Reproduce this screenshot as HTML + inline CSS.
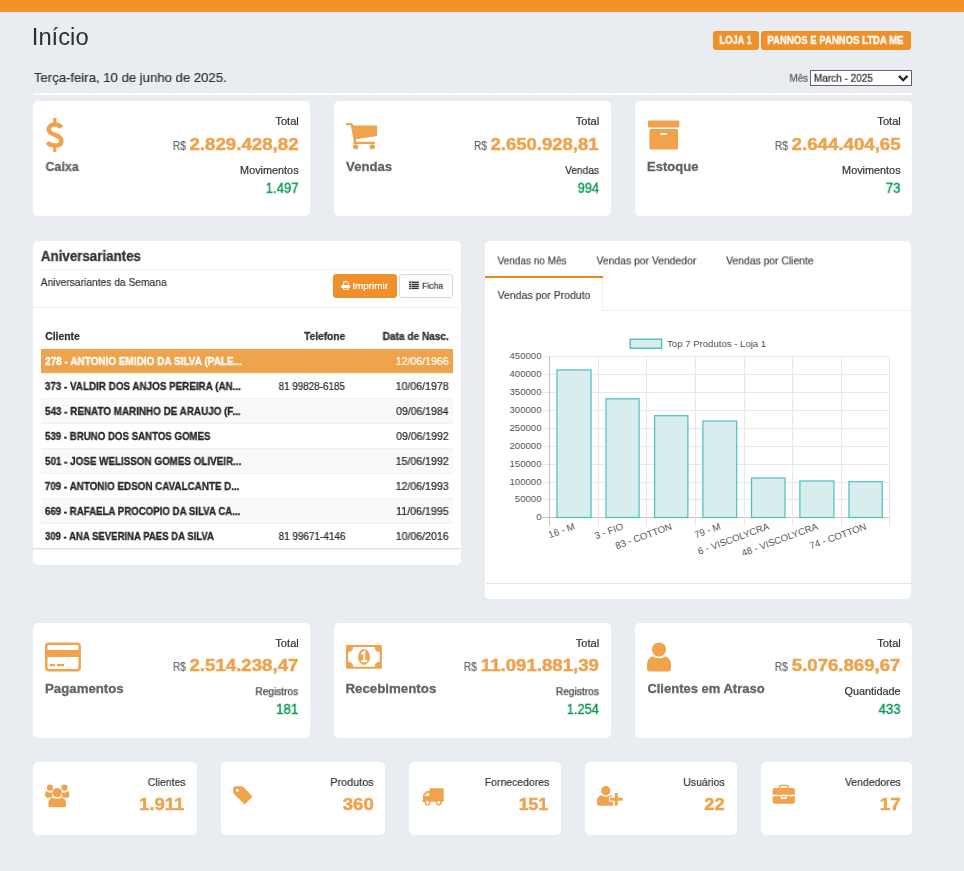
<!DOCTYPE html><html><head><meta charset="utf-8"><style>
*{margin:0;padding:0;box-sizing:border-box}
html,body{width:964px;height:871px;overflow:hidden;background:#e9edf1;font-family:"Liberation Sans",sans-serif;position:relative}
.a{position:absolute}
.card{position:absolute;background:#fff;border-radius:5px}
.t{position:absolute;white-space:nowrap;line-height:1;left:0;top:0;will-change:transform;transform-origin:0 0}
svg{position:absolute;overflow:visible}
</style></head><body>
<div class="a" style="left:0;top:0;width:964px;height:12px;background:#f39325"></div>
<div class="a" style="left:713px;top:31px;width:46px;height:19px;background:#f0902b;border-radius:3px"></div>
<div class="a" style="left:761px;top:31px;width:150px;height:19px;background:#f0902b;border-radius:3px"></div>
<div class="a" style="left:810px;top:70px;width:102px;height:16px;background:#fff;border:1px solid #666"></div>
<svg style="left:0;top:0" width="964" height="871"><path d="M898.9 75.9 L903.2 80.2 L907.5 75.9" fill="none" stroke="#222" stroke-width="2.2"/></svg>
<div class="a" style="left:33px;top:93px;width:879px;height:1px;background:repeating-linear-gradient(90deg,#f4f6f8 0 3px,#fff 3px 5px)"></div>
<div class="a" style="left:33px;top:94px;width:879px;height:1px;background:#fff"></div>
<div class="card" style="left:33px;top:101px;width:277px;height:115px"></div>
<div class="card" style="left:334px;top:101px;width:277px;height:115px"></div>
<div class="card" style="left:635px;top:101px;width:277px;height:115px"></div>
<div class="card" style="left:33px;top:241px;width:428px;height:324px"></div>
<div class="a" style="left:41px;top:269px;width:412px;height:1px;background:#f0f0f0"></div>
<div class="a" style="left:33px;top:307px;width:428px;height:1px;background:#f0f0f0"></div>
<div class="a" style="left:333px;top:274px;width:64px;height:24px;background:#f0902b;border-radius:3px"></div>
<div class="a" style="left:399px;top:274px;width:54px;height:24px;background:#fff;border:1px solid #d8d8d8;border-radius:3px"></div>
<div class="a" style="left:41px;top:349px;width:412px;height:24px;background:#eea44d"></div>
<div class="a" style="left:41px;top:374px;width:412px;height:24px;background:#fff"></div>
<div class="a" style="left:41px;top:373px;width:412px;height:1px;background:#f1f1f1"></div>
<div class="a" style="left:41px;top:399px;width:412px;height:24px;background:#f9f9f9"></div>
<div class="a" style="left:41px;top:398px;width:412px;height:1px;background:#f1f1f1"></div>
<div class="a" style="left:41px;top:424px;width:412px;height:24px;background:#fff"></div>
<div class="a" style="left:41px;top:423px;width:412px;height:1px;background:#f1f1f1"></div>
<div class="a" style="left:41px;top:449px;width:412px;height:24px;background:#f9f9f9"></div>
<div class="a" style="left:41px;top:448px;width:412px;height:1px;background:#f1f1f1"></div>
<div class="a" style="left:41px;top:474px;width:412px;height:24px;background:#fff"></div>
<div class="a" style="left:41px;top:473px;width:412px;height:1px;background:#f1f1f1"></div>
<div class="a" style="left:41px;top:499px;width:412px;height:24px;background:#f9f9f9"></div>
<div class="a" style="left:41px;top:498px;width:412px;height:1px;background:#f1f1f1"></div>
<div class="a" style="left:41px;top:524px;width:412px;height:24px;background:#fff"></div>
<div class="a" style="left:41px;top:523px;width:412px;height:1px;background:#f1f1f1"></div>
<div class="a" style="left:33px;top:548px;width:428px;height:1px;background:#dddddd"></div>
<div class="a" style="left:33px;top:549px;width:428px;height:1px;background:#f2f2f2"></div>
<div class="card" style="left:485px;top:241px;width:426px;height:358px"></div>
<div class="a" style="left:485px;top:276px;width:118px;height:2px;background:#e8861c"></div>
<div class="a" style="left:602px;top:278px;width:1px;height:32px;background:#f0f0f0"></div>
<div class="a" style="left:602px;top:310px;width:309px;height:1px;background:#f0f0f0"></div>
<div class="a" style="left:486px;top:583px;width:425px;height:1px;background:#e3e3e3"></div>
<div class="card" style="left:33px;top:623px;width:277px;height:115px"></div>
<div class="card" style="left:334px;top:623px;width:277px;height:115px"></div>
<div class="card" style="left:635px;top:623px;width:277px;height:115px"></div>
<div class="card" style="left:33px;top:762px;width:164px;height:73px"></div>
<div class="card" style="left:221px;top:762px;width:164px;height:73px"></div>
<div class="card" style="left:409px;top:762px;width:152px;height:73px"></div>
<div class="card" style="left:585px;top:762px;width:152px;height:73px"></div>
<div class="card" style="left:761px;top:762px;width:151px;height:73px"></div>

<svg style="left:0;top:0" width="964" height="871">
<!-- dollar -->
<g fill="#eea34c">
<rect x="53.1" y="118" width="3.3" height="6"/><rect x="53.1" y="145.6" width="3.3" height="6.3"/>
</g>
<path d="M61.2 127.6 C59.8 125.4 57.4 124.6 54.6 124.6 C51 124.6 48.8 126.6 48.8 129.4 C48.8 132.4 51.4 133.6 55 134.8 C59.2 136.2 61.4 137.8 61.4 141.2 C61.4 144.4 58.6 145.6 54.8 145.6 C51.6 145.6 49 144.4 47.4 142.4" fill="none" stroke="#eea34c" stroke-width="4.5"/>
<!-- cart -->
<g fill="#eea34c">
<rect x="345.9" y="123" width="6.5" height="2.3" rx="1"/>
<path d="M350.6 124 L353 124 L356.4 142.6 L354 142.6 Z"/>
<path d="M351.6 125.4 L376.3 125.4 Q377.1 125.4 377.1 126.3 L377.1 136 L354.8 139.4 Z"/>
<rect x="353.6" y="141.8" width="21.4" height="2.2"/>
<circle cx="355.6" cy="146.8" r="2.6"/><circle cx="372.4" cy="146.8" r="2.6"/>
</g>
<!-- archive -->
<g fill="#eea34c">
<rect x="648" y="120.6" width="31.3" height="7" rx="1.2"/>
<rect x="649.4" y="129" width="28.7" height="20.4" rx="1.5"/>
</g>
<rect x="660.3" y="133" width="6.6" height="2" rx="1" fill="#fff"/>
<!-- credit card -->
<rect x="46.25" y="643.85" width="33.4" height="26.3" rx="2.6" fill="none" stroke="#eea34c" stroke-width="2.5"/>
<rect x="46" y="650" width="34" height="7" fill="#eea34c"/>
<rect x="50" y="664" width="4.8" height="2.3" fill="#eea34c"/><rect x="57" y="664" width="7" height="2.3" fill="#eea34c"/>
<!-- money -->
<rect x="346" y="644.9" width="35.9" height="23.9" fill="#eea34c" rx="0.8"/>
<path d="M353.2 647.1 L374.7 647.1 A5 5 0 0 0 379.7 652.1 L379.7 661.7 A5 5 0 0 0 374.7 666.7 L353.2 666.7 A5 5 0 0 0 348.2 661.7 L348.2 652.1 A5 5 0 0 0 353.2 647.1 Z" fill="#fff"/>
<ellipse cx="364" cy="657" rx="5.9" ry="7.9" fill="#eea34c"/>
<path d="M361.3 654.2 L364.3 651.7 L364.3 660.8 M361.2 661.2 L367.3 661.2" fill="none" stroke="#fff" stroke-width="2"/>
<!-- user -->
<circle cx="659" cy="649.6" r="7.1" fill="#eea34c"/>
<path d="M652.4 656.2 Q655 658.2 659 658.2 Q663 658.2 665.6 656.2 Q671 658.6 671 664.8 L671 668.6 Q671 671.4 668.2 671.4 L649.8 671.4 Q647 671.4 647 668.6 L647 664.8 Q647 658.6 652.4 656.2 Z" fill="#eea34c"/>
<!-- users -->
<g fill="#eea34c">
<circle cx="50" cy="787.7" r="3.1"/><circle cx="64.4" cy="787.7" r="3.1"/>
<circle cx="57.2" cy="792.6" r="4.7"/>
<path d="M46.6 791 Q48.3 792.7 50.2 792.7 Q51.4 792.7 52.4 792.2 Q51.9 794.8 52.8 796.7 Q51.3 797.7 49.2 797.7 L47.6 797.7 Q45.1 797.7 45.1 795.2 L45.1 793.6 Q45.1 791.8 46.6 791 Z"/>
<path d="M67.8 791 Q66.1 792.7 64.2 792.7 Q63 792.7 62 792.2 Q62.5 794.8 61.6 796.7 Q63.1 797.7 65.2 797.7 L66.8 797.7 Q69.3 797.7 69.3 795.2 L69.3 793.6 Q69.3 791.8 67.8 791 Z"/>
<path d="M52.5 797.4 Q54.6 798.6 57.2 798.6 Q59.8 798.6 61.9 797.4 Q66 799 66 803.2 L66 805.4 Q66 807.3 64 807.3 L50.4 807.3 Q48.4 807.3 48.4 805.4 L48.4 803.2 Q48.4 799 52.5 797.4 Z"/>
</g>
<!-- tag -->
<path d="M235.6 786.3 L241.3 786.3 Q242.5 786.3 243.3 787.1 L251.9 795.7 Q252.7 796.5 251.9 797.3 L245.4 803.8 Q244.6 804.6 243.8 803.8 L234.8 794.8 Q233.2 793.2 233.2 791.5 L233.2 788.7 Q233.2 786.3 235.6 786.3 Z" fill="#eea34c"/>
<circle cx="237.3" cy="790.3" r="1.5" fill="#fff"/>
<!-- truck -->
<g fill="#eea34c">
<rect x="429.5" y="788.2" width="14.2" height="13.6" rx="0.5"/>
<path d="M423 801.8 L423 794.9 L426.5 791.1 L430 791.1 L430 801.8 Z"/>
<rect x="422.1" y="800.7" width="2.2" height="1.2"/>
<circle cx="427.5" cy="802.5" r="2.9"/><circle cx="438.8" cy="802.5" r="2.9"/>
</g>
<path d="M424.3 796 L427.2 792.9 L429.2 792.9 L429.2 796 Z" fill="#fff"/>
<circle cx="427.5" cy="802.5" r="1.5" fill="#fff"/><circle cx="438.8" cy="802.5" r="1.5" fill="#fff"/>
<!-- user-plus -->
<g fill="#eea34c">
<circle cx="605.8" cy="790.7" r="4.7"/>
<path d="M601.2 795.3 Q603.3 796.7 605.8 796.7 Q608.3 796.7 610.4 795.3 Q612.6 796 613.3 797.4 L613.3 805.8 L599.2 805.8 Q597.1 805.8 597.1 803.7 L597.1 800.8 Q597.1 796.6 601.2 795.3 Z"/>
</g>
<path d="M616.3 791.9 L616.3 806.6 M609 799.25 L623.7 799.25" stroke="#fff" stroke-width="5" fill="none"/>
<path d="M616.3 792.9 L616.3 805.6 M610 799.25 L622.7 799.25" stroke="#eea34c" stroke-width="3" fill="none"/>
<!-- briefcase -->
<g fill="#eea34c">
<path d="M779 788.3 L779 786 Q779 784.8 780.2 784.8 L787.3 784.8 Q788.5 784.8 788.5 786 L788.5 788.3 L787.1 788.3 L787.1 786.2 L780.4 786.2 L780.4 788.3 Z"/>
<path d="M772.6 794.8 L772.6 790.2 Q772.6 788.1 774.7 788.1 L792.8 788.1 Q794.9 788.1 794.9 790.2 L794.9 794.8 Z"/>
<path d="M772.6 796.2 L780.9 796.2 L780.9 798.9 L786.6 798.9 L786.6 796.2 L794.9 796.2 L794.9 801.7 Q794.9 803.8 792.8 803.8 L774.7 803.8 Q772.6 803.8 772.6 801.7 Z"/>
<rect x="782.1" y="796" width="3.3" height="1.4"/>
</g>
<!-- printer (white) -->
<path d="M343.7 285.3 L343.7 281.75 L347.3 281.75 L348.3 282.75 L348.3 285.3" fill="none" stroke="#fff" stroke-width="1"/>
<rect x="341.3" y="285.1" width="8.9" height="2.8" rx="1" fill="#fff"/>
<path d="M343.7 287.5 L343.7 289.4 L348.3 289.4 L348.3 287.5" fill="none" stroke="#fff" stroke-width="1"/>
<!-- list -->
<g fill="#333">
<rect x="409.1" y="281.5" width="2.4" height="1.4"/><rect x="411.9" y="281.5" width="6.9" height="1.4"/>
<rect x="409.1" y="283.7" width="2.4" height="1.4"/><rect x="411.9" y="283.7" width="6.9" height="1.4"/>
<rect x="409.1" y="285.7" width="2.4" height="1.4"/><rect x="411.9" y="285.7" width="6.9" height="1.4"/>
<rect x="409.1" y="287.7" width="2.4" height="1.4"/><rect x="411.9" y="287.7" width="6.9" height="1.4"/>
</g>
</svg>
<svg style="left:0;top:0" width="964" height="871" font-family="Liberation Sans" font-size="9.6" fill="#555">
<line x1="542" y1="517.5" x2="890" y2="517.5" stroke="#c4c4c4" stroke-width="1"/>
<text x="541.5" y="520.40" text-anchor="end">0</text>
<line x1="542" y1="499.5" x2="890" y2="499.5" stroke="#e8e8e8" stroke-width="1"/>
<text x="541.5" y="502.40" text-anchor="end">50000</text>
<line x1="542" y1="482.5" x2="890" y2="482.5" stroke="#e8e8e8" stroke-width="1"/>
<text x="541.5" y="485.40" text-anchor="end">100000</text>
<line x1="542" y1="464.5" x2="890" y2="464.5" stroke="#e8e8e8" stroke-width="1"/>
<text x="541.5" y="467.40" text-anchor="end">150000</text>
<line x1="542" y1="446.5" x2="890" y2="446.5" stroke="#e8e8e8" stroke-width="1"/>
<text x="541.5" y="449.40" text-anchor="end">200000</text>
<line x1="542" y1="428.5" x2="890" y2="428.5" stroke="#e8e8e8" stroke-width="1"/>
<text x="541.5" y="431.40" text-anchor="end">250000</text>
<line x1="542" y1="410.5" x2="890" y2="410.5" stroke="#e8e8e8" stroke-width="1"/>
<text x="541.5" y="413.40" text-anchor="end">300000</text>
<line x1="542" y1="392.5" x2="890" y2="392.5" stroke="#e8e8e8" stroke-width="1"/>
<text x="541.5" y="395.40" text-anchor="end">350000</text>
<line x1="542" y1="374.5" x2="890" y2="374.5" stroke="#e8e8e8" stroke-width="1"/>
<text x="541.5" y="377.40" text-anchor="end">400000</text>
<line x1="542" y1="356.5" x2="890" y2="356.5" stroke="#e8e8e8" stroke-width="1"/>
<text x="541.5" y="359.40" text-anchor="end">450000</text>
<line x1="549.5" y1="356" x2="549.5" y2="525.6" stroke="#c4c4c4" stroke-width="1"/>
<line x1="598.5" y1="356" x2="598.5" y2="525.6" stroke="#e8e8e8" stroke-width="1"/>
<line x1="646.5" y1="356" x2="646.5" y2="525.6" stroke="#e8e8e8" stroke-width="1"/>
<line x1="695.5" y1="356" x2="695.5" y2="525.6" stroke="#e8e8e8" stroke-width="1"/>
<line x1="744.5" y1="356" x2="744.5" y2="525.6" stroke="#e8e8e8" stroke-width="1"/>
<line x1="792.5" y1="356" x2="792.5" y2="525.6" stroke="#e8e8e8" stroke-width="1"/>
<line x1="841.5" y1="356" x2="841.5" y2="525.6" stroke="#e8e8e8" stroke-width="1"/>
<line x1="889.5" y1="356" x2="889.5" y2="525.6" stroke="#e8e8e8" stroke-width="1"/>
<rect x="557.00" y="369.90" width="34.00" height="147.60" fill="#d8eeee" stroke="#4bbfbf" stroke-width="1.2"/>
<text transform="translate(574.30,525.9) rotate(-20)" x="0" y="3.3" text-anchor="end">16 - M</text>
<rect x="606.00" y="398.80" width="33.10" height="118.70" fill="#d8eeee" stroke="#4bbfbf" stroke-width="1.2"/>
<text transform="translate(622.90,525.9) rotate(-20)" x="0" y="3.3" text-anchor="end">3 - FIO</text>
<rect x="654.60" y="415.70" width="33.30" height="101.80" fill="#d8eeee" stroke="#4bbfbf" stroke-width="1.2"/>
<text transform="translate(671.50,525.9) rotate(-20)" x="0" y="3.3" text-anchor="end">83 - COTTON</text>
<rect x="702.90" y="421.10" width="33.80" height="96.40" fill="#d8eeee" stroke="#4bbfbf" stroke-width="1.2"/>
<text transform="translate(720.10,525.9) rotate(-20)" x="0" y="3.3" text-anchor="end">79 - M</text>
<rect x="751.50" y="478.00" width="33.50" height="39.50" fill="#d8eeee" stroke="#4bbfbf" stroke-width="1.2"/>
<text transform="translate(768.70,525.9) rotate(-20)" x="0" y="3.3" text-anchor="end">6 - VISCOLYCRA</text>
<rect x="799.90" y="481.00" width="34.00" height="36.50" fill="#d8eeee" stroke="#4bbfbf" stroke-width="1.2"/>
<text transform="translate(817.30,525.9) rotate(-20)" x="0" y="3.3" text-anchor="end">48 - VISCOLYCRA</text>
<rect x="849.00" y="481.70" width="33.20" height="35.80" fill="#d8eeee" stroke="#4bbfbf" stroke-width="1.2"/>
<text transform="translate(865.90,525.9) rotate(-20)" x="0" y="3.3" text-anchor="end">74 - COTTON</text>
<rect x="630.2" y="339.2" width="31.4" height="9" fill="#d8eeee" stroke="#4bbfbf" stroke-width="1.4"/>
<text x="667" y="347.2">Top 7 Produtos - Loja 1</text>
</svg>
<div class="t" id="h1" style="transform:translate(31.79px,26.30px) scale(1.03347,1.00000);font-size:23.00px;font-weight:400;color:#2e2e2e;-webkit-text-stroke:0.00px #2e2e2e">Início</div>
<div class="t" id="date" style="transform:translate(33.88px,71.00px) scale(0.96643,1.00000);font-size:13.60px;font-weight:400;color:#333;-webkit-text-stroke:0.20px #333">Terça-feira, 10 de junho de 2025.</div>
<div class="t" id="b1" style="transform:translate(719.50px,34.80px) scale(0.87984,1.00000);font-size:10.60px;font-weight:700;color:#fff;-webkit-text-stroke:0.30px #fff">LOJA 1</div>
<div class="t" id="b2" style="transform:translate(767.33px,34.90px) scale(0.90251,1.00000);font-size:10.60px;font-weight:700;color:#fff;-webkit-text-stroke:0.30px #fff">PANNOS E PANNOS LTDA ME</div>
<div class="t" id="mes" style="transform:translate(789.49px,72.80px) scale(0.91881,1.00000);font-size:10.70px;font-weight:400;color:#555;-webkit-text-stroke:0.20px #555">Mês</div>
<div class="t" id="sel" style="transform:translate(813.88px,72.80px) scale(0.92926,1.00000);font-size:10.80px;font-weight:400;color:#222;-webkit-text-stroke:0.20px #222">March - 2025</div>
<div class="t" id="c1lab0" style="transform:translate(45.49px,161.00px) scale(0.96688,1.00000);font-size:12.90px;font-weight:700;color:#636363;-webkit-text-stroke:0.30px #636363">Caixa</div>
<div class="t" id="c1tot0" style="transform:translate(275.33px,116.00px) scale(1.04853,1.00000);font-size:10.60px;font-weight:400;color:#333333;-webkit-text-stroke:0.20px #333333">Total</div>
<div class="t" id="c1rs0" style="transform:translate(172.75px,140.00px) scale(0.83214,1.00000);font-size:12.40px;font-weight:400;color:#666666;-webkit-text-stroke:0.20px #666666">R$</div>
<div class="t" id="c1num0" style="transform:translate(189.47px,136.00px) scale(1.07461,1.00000);font-size:17.40px;font-weight:700;color:#eea34c;-webkit-text-stroke:0.50px #eea34c">2.829.428,82</div>
<div class="t" id="c1sub0" style="transform:translate(240.12px,165.00px) scale(1.02343,1.00000);font-size:10.60px;font-weight:400;color:#333333;-webkit-text-stroke:0.20px #333333">Movimentos</div>
<div class="t" id="c1cnt0" style="transform:translate(265.64px,180.80px) scale(0.93998,1.00000);font-size:14.00px;font-weight:400;color:#00954f;-webkit-text-stroke:0.35px #00954f">1.497</div>
<div class="t" id="c1lab1" style="transform:translate(346.12px,161.00px) scale(1.01621,1.00000);font-size:12.90px;font-weight:700;color:#636363;-webkit-text-stroke:0.30px #636363">Vendas</div>
<div class="t" id="c1tot1" style="transform:translate(575.80px,116.00px) scale(1.04657,1.00000);font-size:10.60px;font-weight:400;color:#333333;-webkit-text-stroke:0.20px #333333">Total</div>
<div class="t" id="c1rs1" style="transform:translate(473.98px,140.00px) scale(0.81978,1.00000);font-size:12.40px;font-weight:400;color:#666666;-webkit-text-stroke:0.20px #666666">R$</div>
<div class="t" id="c1num1" style="transform:translate(490.44px,136.00px) scale(1.06522,1.00000);font-size:17.40px;font-weight:700;color:#eea34c;-webkit-text-stroke:0.50px #eea34c">2.650.928,81</div>
<div class="t" id="c1sub1" style="transform:translate(565.14px,165.00px) scale(0.95750,1.00000);font-size:10.60px;font-weight:400;color:#333333;-webkit-text-stroke:0.20px #333333">Vendas</div>
<div class="t" id="c1cnt1" style="transform:translate(577.76px,180.80px) scale(0.90993,1.00000);font-size:14.00px;font-weight:400;color:#00954f;-webkit-text-stroke:0.35px #00954f">994</div>
<div class="t" id="c1lab2" style="transform:translate(646.98px,161.00px) scale(1.01192,1.00000);font-size:12.90px;font-weight:700;color:#636363;-webkit-text-stroke:0.30px #636363">Estoque</div>
<div class="t" id="c1tot2" style="transform:translate(877.33px,116.00px) scale(1.04853,1.00000);font-size:10.60px;font-weight:400;color:#333333;-webkit-text-stroke:0.20px #333333">Total</div>
<div class="t" id="c1rs2" style="transform:translate(774.80px,140.00px) scale(0.83491,1.00000);font-size:12.40px;font-weight:400;color:#666666;-webkit-text-stroke:0.20px #666666">R$</div>
<div class="t" id="c1num2" style="transform:translate(791.62px,136.00px) scale(1.07315,1.00000);font-size:17.40px;font-weight:700;color:#eea34c;-webkit-text-stroke:0.50px #eea34c">2.644.404,65</div>
<div class="t" id="c1sub2" style="transform:translate(842.12px,165.00px) scale(1.02343,1.00000);font-size:10.60px;font-weight:400;color:#333333;-webkit-text-stroke:0.20px #333333">Movimentos</div>
<div class="t" id="c1cnt2" style="transform:translate(885.70px,180.80px) scale(0.95171,1.00000);font-size:14.00px;font-weight:400;color:#00954f;-webkit-text-stroke:0.35px #00954f">73</div>
<div class="t" id="anh" style="transform:translate(40.84px,250.00px) scale(0.96679,1.00000);font-size:13.80px;font-weight:700;color:#333;-webkit-text-stroke:0.30px #333">Aniversariantes</div>
<div class="t" id="ans" style="transform:translate(40.72px,277.00px) scale(0.89154,1.00000);font-size:11.50px;font-weight:400;color:#333;-webkit-text-stroke:0.20px #333">Aniversariantes da Semana</div>
<div class="t" id="imp" style="transform:translate(352.13px,280.80px) scale(1.02649,1.00000);font-size:9.70px;font-weight:400;color:#fff;-webkit-text-stroke:0.20px #fff">Imprimir</div>
<div class="t" id="fic" style="transform:translate(422.19px,280.80px) scale(0.88457,1.00000);font-size:9.70px;font-weight:400;color:#333;-webkit-text-stroke:0.20px #333">Ficha</div>
<div class="t" id="thc" style="transform:translate(45.14px,332.00px) scale(1.02003,1.00000);font-size:10.20px;font-weight:700;color:#333;-webkit-text-stroke:0.30px #333">Cliente</div>
<div class="t" id="tht" style="transform:translate(304.13px,332.00px) scale(0.99733,1.00000);font-size:10.20px;font-weight:700;color:#333;-webkit-text-stroke:0.30px #333">Telefone</div>
<div class="t" id="thd" style="transform:translate(382.62px,332.00px) scale(0.99058,1.00000);font-size:10.20px;font-weight:700;color:#333;-webkit-text-stroke:0.30px #333">Data de Nasc.</div>
<div class="t" id="rn0" style="transform:translate(45.12px,357.00px) scale(0.97984,1.00000);font-size:10.20px;font-weight:700;color:#fff;-webkit-text-stroke:0.30px #fff">278 - ANTONIO EMIDIO DA SILVA (PALE...</div>
<div class="t" id="rd0" style="transform:translate(395.77px,356.00px) scale(0.97783,1.00000);font-size:10.80px;font-weight:400;color:#fff;-webkit-text-stroke:0.20px #fff">12/06/1966</div>
<div class="t" id="rn1" style="transform:translate(44.86px,382.00px) scale(0.96622,1.00000);font-size:10.20px;font-weight:700;color:#262626;-webkit-text-stroke:0.30px #262626">373 - VALDIR DOS ANJOS PEREIRA (AN...</div>
<div class="t" id="rp1" style="transform:translate(278.63px,381.00px) scale(0.91110,1.00000);font-size:10.80px;font-weight:400;color:#262626;-webkit-text-stroke:0.20px #262626">81 99828-6185</div>
<div class="t" id="rd1" style="transform:translate(395.66px,381.00px) scale(0.98085,1.00000);font-size:10.80px;font-weight:400;color:#262626;-webkit-text-stroke:0.20px #262626">10/06/1978</div>
<div class="t" id="rn2" style="transform:translate(45.00px,407.00px) scale(0.96818,1.00000);font-size:10.20px;font-weight:700;color:#262626;-webkit-text-stroke:0.30px #262626">543 - RENATO MARINHO DE ARAUJO (F...</div>
<div class="t" id="rd2" style="transform:translate(396.18px,406.00px) scale(0.96760,1.00000);font-size:10.80px;font-weight:400;color:#262626;-webkit-text-stroke:0.20px #262626">09/06/1984</div>
<div class="t" id="rn3" style="transform:translate(45.03px,432.00px) scale(0.95004,1.00000);font-size:10.20px;font-weight:700;color:#262626;-webkit-text-stroke:0.30px #262626">539 - BRUNO DOS SANTOS GOMES</div>
<div class="t" id="rd3" style="transform:translate(396.19px,431.00px) scale(0.97172,1.00000);font-size:10.80px;font-weight:400;color:#262626;-webkit-text-stroke:0.20px #262626">09/06/1992</div>
<div class="t" id="rn4" style="transform:translate(45.00px,457.00px) scale(0.96575,1.00000);font-size:10.20px;font-weight:700;color:#262626;-webkit-text-stroke:0.30px #262626">501 - JOSE WELISSON GOMES OLIVEIR...</div>
<div class="t" id="rd4" style="transform:translate(395.67px,456.00px) scale(0.98179,1.00000);font-size:10.80px;font-weight:400;color:#262626;-webkit-text-stroke:0.20px #262626">15/06/1992</div>
<div class="t" id="rn5" style="transform:translate(44.77px,482.00px) scale(0.96543,1.00000);font-size:10.20px;font-weight:700;color:#262626;-webkit-text-stroke:0.30px #262626">709 - ANTONIO EDSON CAVALCANTE D...</div>
<div class="t" id="rd5" style="transform:translate(395.66px,481.00px) scale(0.98092,1.00000);font-size:10.80px;font-weight:400;color:#262626;-webkit-text-stroke:0.20px #262626">12/06/1993</div>
<div class="t" id="rn6" style="transform:translate(45.01px,507.00px) scale(0.94966,1.00000);font-size:10.20px;font-weight:700;color:#262626;-webkit-text-stroke:0.30px #262626">669 - RAFAELA PROCOPIO DA SILVA CA...</div>
<div class="t" id="rd6" style="transform:translate(395.99px,506.00px) scale(0.98952,1.00000);font-size:10.80px;font-weight:400;color:#262626;-webkit-text-stroke:0.20px #262626">11/06/1995</div>
<div class="t" id="rn7" style="transform:translate(44.93px,532.00px) scale(0.93827,1.00000);font-size:10.20px;font-weight:700;color:#262626;-webkit-text-stroke:0.30px #262626">309 - ANA SEVERINA PAES DA SILVA</div>
<div class="t" id="rp7" style="transform:translate(278.63px,531.00px) scale(0.91831,1.00000);font-size:10.80px;font-weight:400;color:#262626;-webkit-text-stroke:0.20px #262626">81 99671-4146</div>
<div class="t" id="rd7" style="transform:translate(395.73px,531.00px) scale(0.97957,1.00000);font-size:10.80px;font-weight:400;color:#262626;-webkit-text-stroke:0.20px #262626">10/06/2016</div>
<div class="t" id="tab1" style="transform:translate(497.51px,254.40px) scale(0.86472,1.00000);font-size:11.60px;font-weight:400;color:#444;-webkit-text-stroke:0.20px #444">Vendas no Mês</div>
<div class="t" id="tab2" style="transform:translate(596.52px,254.40px) scale(0.89417,1.00000);font-size:11.60px;font-weight:400;color:#444;-webkit-text-stroke:0.20px #444">Vendas por Vendedor</div>
<div class="t" id="tab3" style="transform:translate(726.10px,254.40px) scale(0.89320,1.00000);font-size:11.60px;font-weight:400;color:#444;-webkit-text-stroke:0.20px #444">Vendas por Cliente</div>
<div class="t" id="tab4" style="transform:translate(497.60px,289.00px) scale(0.90574,1.00000);font-size:11.60px;font-weight:400;color:#444;-webkit-text-stroke:0.20px #444">Vendas por Produto</div>
<div class="t" id="c2lab0" style="transform:translate(45.03px,683.00px) scale(1.02564,1.00000);font-size:12.90px;font-weight:700;color:#636363;-webkit-text-stroke:0.30px #636363">Pagamentos</div>
<div class="t" id="c2tot0" style="transform:translate(275.31px,637.70px) scale(1.04859,1.00000);font-size:10.60px;font-weight:400;color:#333333;-webkit-text-stroke:0.20px #333333">Total</div>
<div class="t" id="c2rs0" style="transform:translate(172.88px,660.90px) scale(0.81898,1.00000);font-size:12.40px;font-weight:400;color:#666666;-webkit-text-stroke:0.20px #666666">R$</div>
<div class="t" id="c2num0" style="transform:translate(189.49px,656.90px) scale(1.07224,1.00000);font-size:17.40px;font-weight:700;color:#eea34c;-webkit-text-stroke:0.50px #eea34c">2.514.238,47</div>
<div class="t" id="c2sub0" style="transform:translate(255.41px,686.20px) scale(0.95509,1.00000);font-size:10.60px;font-weight:400;color:#333333;-webkit-text-stroke:0.20px #333333">Registros</div>
<div class="t" id="c2cnt0" style="transform:translate(276.07px,701.90px) scale(0.95478,1.00000);font-size:14.00px;font-weight:400;color:#00954f;-webkit-text-stroke:0.35px #00954f">181</div>
<div class="t" id="c2lab1" style="transform:translate(345.49px,683.00px) scale(1.03058,1.00000);font-size:12.90px;font-weight:700;color:#636363;-webkit-text-stroke:0.30px #636363">Recebimentos</div>
<div class="t" id="c2tot1" style="transform:translate(575.81px,637.70px) scale(1.04827,1.00000);font-size:10.60px;font-weight:400;color:#333333;-webkit-text-stroke:0.20px #333333">Total</div>
<div class="t" id="c2rs1" style="transform:translate(463.77px,660.90px) scale(0.82220,1.00000);font-size:12.40px;font-weight:400;color:#666666;-webkit-text-stroke:0.20px #666666">R$</div>
<div class="t" id="c2num1" style="transform:translate(480.87px,656.90px) scale(1.07077,1.00000);font-size:17.40px;font-weight:700;color:#eea34c;-webkit-text-stroke:0.50px #eea34c">11.091.881,39</div>
<div class="t" id="c2sub1" style="transform:translate(555.86px,686.20px) scale(0.96248,1.00000);font-size:10.60px;font-weight:400;color:#333333;-webkit-text-stroke:0.20px #333333">Registros</div>
<div class="t" id="c2cnt1" style="transform:translate(566.82px,701.90px) scale(0.91177,1.00000);font-size:14.00px;font-weight:400;color:#00954f;-webkit-text-stroke:0.35px #00954f">1.254</div>
<div class="t" id="c2lab2" style="transform:translate(647.38px,683.00px) scale(1.00771,1.00000);font-size:12.90px;font-weight:700;color:#636363;-webkit-text-stroke:0.30px #636363">Clientes em Atraso</div>
<div class="t" id="c2tot2" style="transform:translate(877.31px,637.70px) scale(1.04859,1.00000);font-size:10.60px;font-weight:400;color:#333333;-webkit-text-stroke:0.20px #333333">Total</div>
<div class="t" id="c2rs2" style="transform:translate(774.77px,660.90px) scale(0.82510,1.00000);font-size:12.40px;font-weight:400;color:#666666;-webkit-text-stroke:0.20px #666666">R$</div>
<div class="t" id="c2num2" style="transform:translate(791.82px,656.90px) scale(1.06919,1.00000);font-size:17.40px;font-weight:700;color:#eea34c;-webkit-text-stroke:0.50px #eea34c">5.076.869,67</div>
<div class="t" id="c2sub2" style="transform:translate(844.62px,686.20px) scale(1.02114,1.00000);font-size:10.60px;font-weight:400;color:#333333;-webkit-text-stroke:0.20px #333333">Quantidade</div>
<div class="t" id="c2cnt2" style="transform:translate(878.65px,701.90px) scale(0.94115,1.00000);font-size:14.00px;font-weight:400;color:#00954f;-webkit-text-stroke:0.35px #00954f">433</div>
<div class="t" id="slab0" style="transform:translate(147.74px,776.00px) scale(0.90237,1.00000);font-size:11.60px;font-weight:400;color:#333333;-webkit-text-stroke:0.20px #333333">Clientes</div>
<div class="t" id="snum0" style="transform:translate(138.91px,796.00px) scale(1.06752,1.00000);font-size:17.40px;font-weight:700;color:#eea34c;-webkit-text-stroke:0.50px #eea34c">1.911</div>
<div class="t" id="slab1" style="transform:translate(330.30px,776.00px) scale(0.93399,1.00000);font-size:11.60px;font-weight:400;color:#333333;-webkit-text-stroke:0.20px #333333">Produtos</div>
<div class="t" id="snum1" style="transform:translate(342.79px,796.00px) scale(1.06666,1.00000);font-size:17.40px;font-weight:700;color:#eea34c;-webkit-text-stroke:0.50px #eea34c">360</div>
<div class="t" id="slab2" style="transform:translate(484.77px,776.00px) scale(0.90201,1.00000);font-size:11.60px;font-weight:400;color:#333333;-webkit-text-stroke:0.20px #333333">Fornecedores</div>
<div class="t" id="snum2" style="transform:translate(518.72px,796.00px) scale(1.01473,1.00000);font-size:17.40px;font-weight:700;color:#eea34c;-webkit-text-stroke:0.50px #eea34c">151</div>
<div class="t" id="slab3" style="transform:translate(683.31px,776.00px) scale(0.90246,1.00000);font-size:11.60px;font-weight:400;color:#333333;-webkit-text-stroke:0.20px #333333">Usuários</div>
<div class="t" id="snum3" style="transform:translate(704.33px,796.00px) scale(1.04987,1.00000);font-size:17.40px;font-weight:700;color:#eea34c;-webkit-text-stroke:0.50px #eea34c">22</div>
<div class="t" id="slab4" style="transform:translate(844.94px,776.00px) scale(0.90134,1.00000);font-size:11.60px;font-weight:400;color:#333333;-webkit-text-stroke:0.20px #333333">Vendedores</div>
<div class="t" id="snum4" style="transform:translate(879.65px,796.00px) scale(1.08713,1.00000);font-size:17.40px;font-weight:700;color:#eea34c;-webkit-text-stroke:0.50px #eea34c">17</div>
</body></html>
